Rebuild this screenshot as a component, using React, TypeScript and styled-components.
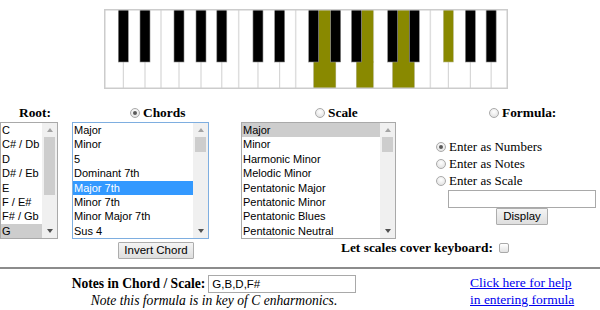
import React from "react";
import styled, { createGlobalStyle, css } from "styled-components";

const GlobalStyle = createGlobalStyle`
  html, body { margin: 0; padding: 0; background: #fff; }
  body {
    font-family: "Liberation Serif", "Times New Roman", serif;
    color: #000;
    overflow: hidden;
  }
`;

const Page = styled.div`
  width: 600px;
  height: 310px;
  overflow: hidden;
`;

/* ---------- keyboard ---------- */

const KeyboardRow = styled.div`
  padding: 9px 0 0 104px;
  height: 80px;
  svg {
    display: block;
  }
`;

const OCT = 134.67;
const KB_W = 404;
const KB_H = 80;
const BLACK_H = 52.5;
const BLACK_W = 10;
// offsets within one octave
const BLACK_X: Record<number, number> = { 1: 14.3, 3: 36, 6: 70, 8: 92, 10: 112.8 };
const WHITE_LOW: Record<number, [number, number]> = {
  0: [0, 19.3],
  2: [19.3, 41],
  4: [41, 57],
  5: [57, 75],
  7: [75, 97],
  9: [97, 117.8],
  11: [117.8, OCT],
};
const WHITE_TOP: Record<number, [number, number]> = {
  0: [0, 14.3],
  2: [24.3, 36],
  4: [46, 57],
  5: [57, 70],
  7: [80, 92],
  9: [102, 112.8],
  11: [122.8, OCT],
};
const LOW_DIVIDERS = [19.3, 41, 75, 97, 117.8];
const FULL_DIVIDERS = [57, OCT];

const OLIVE = "#898900";

const Keyboard = ({ lit }: { lit: number[] }) => {
  const whites: React.ReactNode[] = [];
  const blacks: React.ReactNode[] = [];
  const lines: React.ReactNode[] = [];
  for (let o = 0; o < 3; o++) {
    const ox = o * OCT;
    LOW_DIVIDERS.forEach((d) =>
      lines.push(
        <line key={`l${o}-${d}`} x1={ox + d} x2={ox + d} y1={BLACK_H} y2={KB_H} stroke="#cfcfcf" strokeWidth={1} />
      )
    );
    FULL_DIVIDERS.forEach((d) =>
      lines.push(
        <line key={`f${o}-${d}`} x1={ox + d} x2={ox + d} y1={0} y2={KB_H} stroke="#dedede" strokeWidth={1.5} />
      )
    );
    for (let n = 0; n < 12; n++) {
      const on = lit.includes(o * 12 + n);
      if (BLACK_X[n] !== undefined) {
        blacks.push(
          <rect
            key={`b${o}-${n}`}
            x={ox + BLACK_X[n]}
            y={0.5}
            width={BLACK_W}
            height={BLACK_H}
            fill={on ? OLIVE : "#000"}
            stroke={on ? "#b9b98a" : "#8a8a8a"}
            strokeWidth={0.6}
          />
        );
      } else if (on) {
        const [tl, tr] = WHITE_TOP[n];
        const [bl, br] = WHITE_LOW[n];
        whites.push(
          <g key={`w${o}-${n}`} fill={OLIVE}>
            <rect x={ox + tl} y={0} width={tr - tl} height={BLACK_H + 1} />
            <rect x={ox + bl} y={BLACK_H} width={br - bl} height={KB_H - BLACK_H} />
          </g>
        );
      }
    }
  }
  return (
    <svg width={KB_W} height={KB_H} viewBox={`0 0 ${KB_W} ${KB_H}`}>
      <rect x={0} y={0} width={KB_W} height={KB_H} fill="#fff" />
      {lines}
      {whites}
      {blacks}
      <rect x={0.75} y={0.75} width={KB_W - 1.5} height={KB_H - 1.5} fill="none" stroke="#cccccc" strokeWidth={1.5} />
    </svg>
  );
};

/* ---------- controls ---------- */

const Controls = styled.div`
  display: grid;
  grid-template-columns: 72px 169px 189px 170px;
  margin-top: 15px;
`;

const Column = styled.div`
  display: flex;
  flex-direction: column;
`;

const Heading = styled.div<{ $indent: number }>`
  height: 18px;
  display: flex;
  align-items: center;
  padding-left: ${(p) => p.$indent}px;
  font-weight: bold;
  font-size: 13.4px;
  white-space: nowrap;
`;

const Radio = styled.span<{ $on?: boolean }>`
  position: relative;
  flex-shrink: 0;
  width: 10px;
  height: 10px;
  box-sizing: border-box;
  border-radius: 50%;
  border: 1px solid #a9a9a9;
  background: radial-gradient(circle at 50% 35%, #ffffff, #dcdcdc);
  margin-right: 3px;
  ${(p) =>
    p.$on &&
    css`
      &::after {
        content: "";
        position: absolute;
        left: 2px;
        top: 2px;
        width: 4px;
        height: 4px;
        border-radius: 50%;
        background: #5a5a5a;
      }
    `}
`;

const ListBox = styled.div<{ $w: number; $focus?: boolean }>`
  width: ${(p) => p.$w}px;
  height: 117px;
  box-sizing: border-box;
  border: 1px solid ${(p) => (p.$focus ? "#7eaee0" : "#a9a9a9")};
  background: #fff;
  display: flex;
  overflow: hidden;
`;

const Options = styled.div`
  flex: 1;
  min-width: 0;
  overflow: hidden;
`;

const Option = styled.div<{ $sel?: "blue" | "gray" }>`
  height: 14.4px;
  line-height: 14.4px;
  padding-left: 1px;
  font-family: "Liberation Sans", Arial, sans-serif;
  font-size: 11px;
  white-space: nowrap;
  ${(p) =>
    p.$sel === "blue" &&
    css`
      background: #3399ff;
      color: #fff;
    `}
  ${(p) =>
    p.$sel === "gray" &&
    css`
      background: #cdcdcd;
    `}
`;

const Track = styled.div`
  width: 15px;
  flex-shrink: 0;
  background: #f0f0f0;
  display: flex;
  flex-direction: column;
  align-items: center;
`;

const Arrow = styled.div<{ $down?: boolean }>`
  height: 14px;
  width: 15px;
  display: flex;
  align-items: center;
  justify-content: center;
  &::before {
    content: "";
    border-left: 3.5px solid transparent;
    border-right: 3.5px solid transparent;
    ${(p) =>
      p.$down
        ? css`
            border-top: 4px solid #505050;
          `
        : css`
            border-bottom: 4px solid #a3a3a3;
          `}
  }
`;

const Thumb = styled.div<{ $h: number }>`
  width: 11px;
  height: ${(p) => p.$h}px;
  background: #cdcdcd;
`;

const Spacer = styled.div`
  flex: 1;
`;

const Scrollbar = ({ thumb }: { thumb: number }) => (
  <Track>
    <Arrow />
    <Thumb $h={thumb} />
    <Spacer />
    <Arrow $down />
  </Track>
);

const FormulaOption = styled.div`
  display: flex;
  align-items: center;
  height: 17px;
  padding-left: 6px;
  font-size: 13px;
  white-space: nowrap;
`;

const FormulaOptions = styled.div`
  margin-top: 16.5px;
`;

const TextBox = styled.div<{ $w: number }>`
  width: ${(p) => p.$w}px;
  height: 18px;
  box-sizing: border-box;
  border: 1px solid #a9a9a9;
  background: #fff;
  font-family: "Liberation Sans", Arial, sans-serif;
  font-weight: normal;
  font-size: 11.5px;
  line-height: 16px;
  padding-left: 3px;
  text-align: left;
`;

const Button = styled.div<{ $w: number; $left: number }>`
  width: ${(p) => p.$w}px;
  height: 17px;
  margin-left: ${(p) => p.$left}px;
  box-sizing: border-box;
  border: 1px solid #adadad;
  border-radius: 1px;
  background: linear-gradient(#f4f4f4, #dedede);
  font-family: "Liberation Sans", Arial, sans-serif;
  font-size: 11.5px;
  display: flex;
  align-items: center;
  justify-content: center;
`;

const FormulaInput = styled(TextBox)`
  margin-left: 18px;
`;

const SecondRow = styled.div`
  grid-column: 3 / span 2;
  height: 18px;
  display: flex;
  align-items: center;
  padding-left: 100px;
  font-weight: bold;
  font-size: 13.4px;
`;

const Checkbox = styled.span`
  width: 10px;
  height: 10px;
  box-sizing: border-box;
  border: 1px solid #a9a9a9;
  border-radius: 2px;
  background: linear-gradient(#ffffff, #e2e2e2);
  margin-left: 6px;
`;

const InvertCell = styled.div`
  grid-column: 2;
  padding-top: 2.5px;
`;

const Rule = styled.div`
  height: 2px;
  margin-top: 8px;
  background: #8c8c8c;
`;

/* ---------- bottom ---------- */

const Bottom = styled.div`
  display: flex;
  margin-top: 6px;
`;

const NotesBlock = styled.div`
  width: 428px;
  display: flex;
  flex-direction: column;
  align-items: center;
`;

const NotesLine = styled.div`
  display: flex;
  align-items: center;
  height: 18px;
  font-weight: bold;
  font-size: 13.6px;
  gap: 3px;
`;

const Note = styled.div`
  font-style: italic;
  font-size: 13.6px;
  line-height: 15px;
`;

const HelpLink = styled.a`
  margin-left: 42px;
  margin-top: -1px;
  color: #0000ee;
  font-size: 13.5px;
  line-height: 17px;
  text-decoration: underline;
`;

const ROOTS = ["C", "C# / Db", "D", "D# / Eb", "E", "F / E#", "F# / Gb", "G"];
const CHORDS = ["Major", "Minor", "5", "Dominant 7th", "Major 7th", "Minor 7th", "Minor Major 7th", "Sus 4"];
const SCALES = [
  "Major",
  "Minor",
  "Harmonic Minor",
  "Melodic Minor",
  "Pentatonic Major",
  "Pentatonic Minor",
  "Pentatonic Blues",
  "Pentatonic Neutral",
];

export default function App() {
  return (
    <Page>
      <GlobalStyle />
      <KeyboardRow>
        <Keyboard lit={[19, 23, 26, 30]} />
      </KeyboardRow>

      <Controls>
        <Column>
          <Heading $indent={19}>Root:</Heading>
          <ListBox $w={58}>
            <Options>
              {ROOTS.map((r) => (
                <Option key={r} $sel={r === "G" ? "gray" : undefined}>
                  {r}
                </Option>
              ))}
            </Options>
            <Scrollbar thumb={58} />
          </ListBox>
        </Column>

        <Column>
          <Heading $indent={58}>
            <Radio $on />
            Chords
          </Heading>
          <ListBox $w={137} $focus>
            <Options>
              {CHORDS.map((c) => (
                <Option key={c} $sel={c === "Major 7th" ? "blue" : undefined}>
                  {c}
                </Option>
              ))}
            </Options>
            <Scrollbar thumb={15} />
          </ListBox>
        </Column>

        <Column>
          <Heading $indent={74}>
            <Radio />
            Scale
          </Heading>
          <ListBox $w={155}>
            <Options>
              {SCALES.map((s, i) => (
                <Option key={s} $sel={i === 0 ? "gray" : undefined}>
                  {s}
                </Option>
              ))}
            </Options>
            <Scrollbar thumb={15} />
          </ListBox>
        </Column>

        <Column>
          <Heading $indent={59}>
            <Radio />
            Formula:
          </Heading>
          <FormulaOptions>
            <FormulaOption>
              <Radio $on />
              Enter as Numbers
            </FormulaOption>
            <FormulaOption>
              <Radio />
              Enter as Notes
            </FormulaOption>
            <FormulaOption>
              <Radio />
              Enter as Scale
            </FormulaOption>
          </FormulaOptions>
          <FormulaInput $w={148} />
          <Button $w={52} $left={66}>
            Display
          </Button>
        </Column>

        <InvertCell>
          <Button $w={76} $left={46}>
            Invert Chord
          </Button>
        </InvertCell>
        <SecondRow>
          Let scales cover keyboard:
          <Checkbox />
        </SecondRow>
      </Controls>

      <Rule />

      <Bottom>
        <NotesBlock>
          <NotesLine>
            Notes in Chord / Scale:
            <TextBox $w={148}>G,B,D,F#</TextBox>
          </NotesLine>
          <Note>Note this formula is in key of C enharmonics.</Note>
        </NotesBlock>
        <HelpLink href="#">
          Click here for help
          <br />
          in entering formula
        </HelpLink>
      </Bottom>
    </Page>
  );
}
